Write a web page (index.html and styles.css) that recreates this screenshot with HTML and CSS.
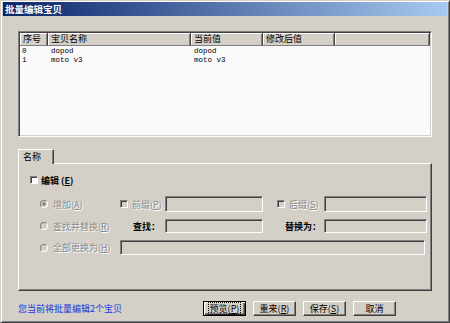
FILE: index.html
```html
<!DOCTYPE html>
<html lang="zh-CN">
  <head>
    <meta charset="utf-8">
    <title>批量编辑宝贝</title>
    <link rel="stylesheet" href="styles.css">
  </head>
  <body>

  <div class="window">
    <div class="titlebar">批量编辑宝贝</div>

    <div class="content">
      <div class="listview">
        <table class="grid">
          <colgroup>
            <col class="c-no"><col class="c-name"><col class="c-cur"><col class="c-new"><col>
          </colgroup>
          <thead>
            <tr><th>序号</th><th>宝贝名称</th><th>当前值</th><th>修改后值</th><th></th></tr>
          </thead>
          <tbody>
            <tr><td>0</td><td>dopod</td><td>dopod</td><td></td><td></td></tr>
            <tr><td>1</td><td>moto v3</td><td>moto v3</td><td></td><td></td></tr>
          </tbody>
        </table>
      </div>

      <div class="tabs">
        <div class="tab">名称</div>
      </div>

      <div class="panel">
        <div class="edit-row">
          <span class="box white"></span>
          <span class="strong">编辑 (<u>E</u>)</span>
        </div>

        <div class="options">
          <div class="opt"><span class="radio checked"></span><span class="off">增加(<u>A</u>)</span></div>
          <div class="opt"><span class="box"></span><span class="off">前缀(<u>P</u>)</span></div>
          <div class="field"></div>
          <div class="opt"><span class="box"></span><span class="off">后缀(<u>S</u>)</span></div>
          <div class="field"></div>

          <div class="opt"><span class="radio"></span><span class="off">查找并替换(<u>R</u>)</span></div>
          <div class="lbl strong">查找：</div>
          <div class="field"></div>
          <div class="lbl strong">替换为：</div>
          <div class="field"></div>

          <div class="opt"><span class="radio"></span><span class="off">全部更换为(<u>H</u>)</span></div>
          <div class="field wide"></div>
        </div>
      </div>

      <div class="footer">
        <span class="status">您当前将批量编辑2个宝贝</span>
        <div class="buttons">
          <div class="btn default"><span class="focus">预览(<u>P</u>)</span></div>
          <div class="btn">重来(<u>R</u>)</div>
          <div class="btn">保存(<u>S</u>)</div>
          <div class="btn">取消</div>
        </div>
      </div>
    </div>
  </div>

  </body>
</html>
```

FILE: styles.css
```css
html, body {
  margin: 0;
  padding: 0;
}
body {
  background: #d4d0c8;
  color: #000;
  font-family: "Noto Sans CJK SC", "Noto Sans", sans-serif;
  font-size: 9px;
}

.window {
  width: 450px;
  height: 323px;
  box-sizing: border-box;
  border: 1px solid;
  border-color: #d4d0c8 #404040 #404040 #d4d0c8;
  box-shadow: inset 1px 1px #fff, inset -1px -1px #808080;
  padding: 1px 2px 2px;
  display: flex;
  flex-direction: column;
}

.titlebar {
  height: 14px;
  line-height: 14px;
  padding-left: 2px;
  background: linear-gradient(to right, #0a246a, #a6caf0);
  color: #fff;
  font-weight: bold;
  font-size: 9.5px;
}

.content {
  flex: 1;
  display: flex;
  flex-direction: column;
  padding: 15px 15px 0;
}

/* list view */
.listview {
  height: 106px;
  box-sizing: border-box;
  padding: 1px;
  background: #fafafa;
  border: 1px solid;
  border-color: #808080 #fff #fff #808080;
  box-shadow: inset 1px 1px #404040, inset -1px -1px #d4d0c8;
}
.grid {
  width: 410px;
  table-layout: fixed;
  border-collapse: separate;
  border-spacing: 0;
}
.c-no { width: 28px; }
.c-name { width: 143px; }
.c-cur { width: 72px; }
.c-new { width: 72px; }

.grid th {
  height: 13px;
  box-sizing: border-box;
  padding: 0 0 0 3px;
  background: #d4d0c8;
  border-right: 1px solid #404040;
  border-bottom: 1px solid #808080;
  box-shadow: inset 1px 1px #fff, inset -1px 0 #808080;
  text-align: left;
  font-weight: normal;
  line-height: 12px;
  white-space: nowrap;
}
.grid td {
  height: 9px;
  padding: 0 0 0 3px;
  font-family: "Liberation Mono", monospace;
  font-size: 7.5px;
  line-height: 9px;
  white-space: nowrap;
}
.grid tbody tr:first-child td {
  padding-top: 1px;
}
.grid td:first-child {
  padding-left: 2px;
}

/* tabs */
.tabs {
  margin-top: 12px;
  display: flex;
}
.tab {
  position: relative;
  z-index: 1;
  width: 36px;
  height: 15px;
  box-sizing: border-box;
  margin-bottom: -1px;
  padding-left: 4px;
  background: #d4d0c8;
  border: 1px solid;
  border-bottom: none;
  border-color: #fff #404040 transparent #fff;
  box-shadow: inset -1px 0 #808080;
  line-height: 13px;
}

.panel {
  height: 128px;
  box-sizing: border-box;
  padding: 10px 0 0 11px;
  border: 1px solid;
  border-color: #fff #404040 #404040 #fff;
  box-shadow: inset -1px -1px #808080;
}

.edit-row {
  height: 12px;
  display: flex;
  align-items: center;
  gap: 3px;
  margin-bottom: 10px;
}

.strong {
  font-weight: bold;
}
.off {
  color: #8a8a8a;
  text-shadow: 1px 1px 0 #fff;
}
u {
  text-decoration: underline;
}

.box {
  width: 8px;
  height: 8px;
  box-sizing: border-box;
  flex: none;
  border: 1px solid;
  border-color: #808080 #fff #fff #808080;
  box-shadow: inset 1px 1px #404040;
  background: #d4d0c8;
}
.box.white {
  background: #fff;
}
.radio {
  width: 8px;
  height: 8px;
  box-sizing: border-box;
  flex: none;
  margin-right: 1px;
  border-radius: 50%;
  border: 1px solid;
  border-color: #808080 #fff #fff #808080;
  background: #d4d0c8;
}
.radio.checked {
  background: radial-gradient(circle, #808080 1.4px, #d4d0c8 1.9px);
}

.options {
  margin-left: 10px;
  display: grid;
  grid-template-columns: 80px 45px 98px 14px 47px 103px;
  grid-template-rows: 16px 14px 15px;
  row-gap: 7px;
  align-items: center;
}
.opt {
  display: flex;
  align-items: center;
  gap: 4px;
  white-space: nowrap;
}
.options > :nth-child(4),
.options > :nth-child(9) {
  grid-column: 5;
}
.options > :nth-child(6),
.options > :nth-child(11) {
  grid-column: 1;
}
.lbl {
  text-align: right;
  padding-right: 4px;
  white-space: nowrap;
}
.options > :nth-child(7) {
  padding-right: 5px;
}
.options > :nth-child(9) {
  padding-right: 3px;
}
.field {
  height: 100%;
  box-sizing: border-box;
  border: 1px solid;
  border-color: #808080 #fff #fff #808080;
  box-shadow: inset 1px 1px #404040, inset -1px -1px #d4d0c8;
  background: #d4d0c8;
}
.field.wide {
  grid-column: 2 / 7;
  margin-right: 2px;
}

/* footer */
.footer {
  margin-top: 10px;
  height: 15px;
  display: flex;
  align-items: center;
}
.status {
  flex: 1;
  color: #1436e0;
  white-space: nowrap;
}
.buttons {
  display: flex;
  gap: 7px;
  margin-right: 36px;
}
.btn {
  width: 43px;
  height: 15px;
  box-sizing: border-box;
  display: flex;
  align-items: center;
  justify-content: center;
  background: #d4d0c8;
  border: 1px solid;
  border-color: #fff #404040 #404040 #fff;
  box-shadow: inset -1px -1px #808080;
  white-space: nowrap;
  line-height: 11px;
}
.btn.default {
  border-color: #000;
  box-shadow: inset 1px 1px #fff, inset -1px -1px #404040, inset -2px -2px #808080;
}
.focus {
  outline: 1px dotted #000;
  padding: 0 1px;
}
```
